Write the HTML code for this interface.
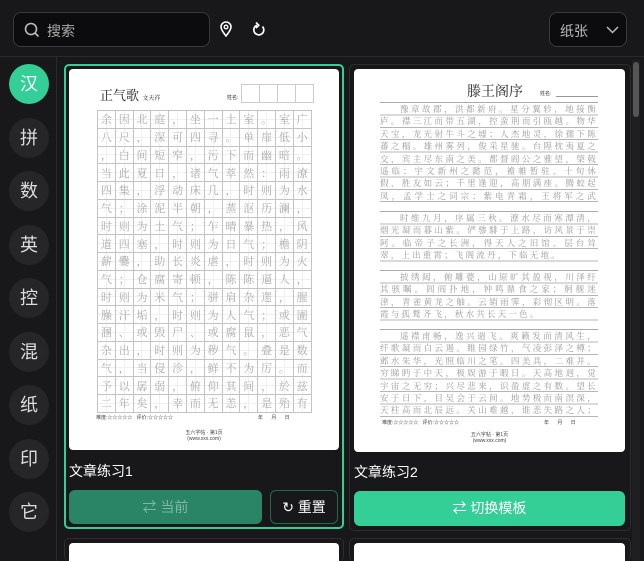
<!DOCTYPE html>
<html style="width:644px;height:561px;overflow:hidden"><head><meta charset="utf-8">
<style>
*{box-sizing:border-box;margin:0;padding:0}
body{width:644px;height:561px;overflow:hidden;background:#18181b;font-family:"Liberation Sans","Noto Sans CJK SC",sans-serif;color:#fff;position:relative}
.abs{position:absolute}
.top{left:0;top:0;width:644px;height:57px;background:#18181b;border-bottom:1px solid #2a2a2e}
.search{left:13px;top:12px;width:197px;height:35px;background:#0c0c0f;border:1px solid #3a3a3e;border-radius:8px}
.search span{position:absolute;left:33px;top:8px;font-size:14px;color:#aaa}
.dd{left:549px;top:12px;width:78px;height:35px;background:#0c0c0f;border:1px solid #3a3a3e;border-radius:8px}
.dd span{position:absolute;left:10px;top:8px;font-size:14px;color:#bbb}
.side{left:0;top:57px;width:57px;height:504px;border-right:1px solid #2a2a2e;background:#18181b}
.c{position:absolute;left:9px;width:40px;height:40px;border-radius:50%;background:#262629;color:#ddd;font-size:18px;text-align:center;line-height:40px}
.c.on{background:#33cf97;color:#fff}
.card{border-radius:5px;background:#18181b;overflow:hidden}
.paper{background:#fff;border-radius:4px;overflow:hidden}
table{border-collapse:collapse;position:absolute;left:28px;top:41px}
td{width:17.8px;height:17.75px;border:1px solid #c4c4c4;font-size:11px;color:#aaa;text-align:center;line-height:16px;padding:0;font-family:"Noto Serif CJK SC",serif;background:linear-gradient(#f0f0f0,#f0f0f0) center/1px 100% no-repeat,linear-gradient(#f0f0f0,#f0f0f0) center/100% 1px no-repeat}
.rp{position:absolute;left:26px;width:218px;font-size:8.5px;line-height:12.4px;letter-spacing:2.2px;color:#999;text-indent:20px;text-align:justify;overflow:hidden;font-family:"Noto Serif CJK SC",serif;background:repeating-linear-gradient(to bottom,transparent 0,transparent 11.4px,#b5b5b5 11.4px,#b5b5b5 12.4px)}
.btn{border-radius:6px;font-size:14px;text-align:center;line-height:34px}
</style></head><body>
<div class="abs top">
 <div class="abs search"><svg class="abs" style="left:10px;top:9px" width="16" height="16" viewBox="0 0 16 16"><circle cx="7" cy="7" r="5.5" fill="none" stroke="#bbb" stroke-width="1.6"/><path d="M11 11l3.5 3.5" stroke="#bbb" stroke-width="1.6"/></svg><span>搜索</span></div>
 <svg class="abs" style="left:219px;top:21px" width="14" height="16" viewBox="0 0 14 16"><path d="M7 15C3 10 2 8 2 6a5 5 0 0 1 10 0c0 2-1 4-5 9z" fill="none" stroke="#fff" stroke-width="1.6"/><circle cx="7" cy="6" r="1.8" fill="none" stroke="#fff" stroke-width="1.4"/></svg>
 <svg class="abs" style="left:252px;top:21px" width="15" height="16" viewBox="0 0 15 16"><path d="M10.5 5.5A5 5 0 1 1 5 4.2" fill="none" stroke="#fff" stroke-width="1.7"/><path d="M4 1.5l2.8 2.8L4 7" fill="none" stroke="#fff" stroke-width="1.6"/></svg>
 <div class="abs dd"><span>纸张</span><svg class="abs" style="left:56px;top:13px" width="13" height="8" viewBox="0 0 13 8"><path d="M1 1l5.5 5.5L12 1" fill="none" stroke="#bbb" stroke-width="1.5"/></svg></div>
</div>
<div class="abs side">
 <div class="c on" style="top:7px">汉</div>
 <div class="c" style="top:61px">拼</div>
 <div class="c" style="top:114px">数</div>
 <div class="c" style="top:168px">英</div>
 <div class="c" style="top:221px">控</div>
 <div class="c" style="top:275px">混</div>
 <div class="c" style="top:328px">纸</div>
 <div class="c" style="top:382px">印</div>
 <div class="c" style="top:435px">它</div>
</div>
<div class="abs" style="left:632px;top:60px;width:8px;height:501px;background:#1f1f22"></div>
<div class="abs" style="left:633px;top:62px;width:6px;height:55px;background:#555;border-radius:3px"></div>

<!-- card 1 -->
<div class="abs card" style="left:64px;top:64px;width:280px;height:465px;border:2px solid #33cf97">
 <div class="abs paper" style="left:3px;top:3px;width:270px;height:381px">
  <div class="abs" style="left:31px;top:16px;font-size:13px;color:#222;font-family:'Noto Serif CJK SC',serif">正气歌 <span style="font-size:6px">文天祥</span></div>
  <div class="abs" style="left:158px;top:25px;font-size:5px;color:#333">姓名:</div>
  <div class="abs" style="left:172px;top:15px;width:73px;height:19px;border:1px solid #ccc;background:repeating-linear-gradient(to right,transparent 0,transparent 17px,#ccc 17px,#ccc 18px)"></div>
  <table>
  <tr><td>余</td><td>因</td><td>北</td><td>庭</td><td>，</td><td>坐</td><td>一</td><td>土</td><td>室</td><td>。</td><td>室</td><td>广</td></tr>
  <tr><td>八</td><td>尺</td><td>，</td><td>深</td><td>可</td><td>四</td><td>寻</td><td>。</td><td>单</td><td>扉</td><td>低</td><td>小</td></tr>
  <tr><td>，</td><td>白</td><td>间</td><td>短</td><td>窄</td><td>，</td><td>污</td><td>下</td><td>而</td><td>幽</td><td>暗</td><td>。</td></tr>
  <tr><td>当</td><td>此</td><td>夏</td><td>日</td><td>，</td><td>诸</td><td>气</td><td>萃</td><td>然</td><td>：</td><td>雨</td><td>潦</td></tr>
  <tr><td>四</td><td>集</td><td>，</td><td>浮</td><td>动</td><td>床</td><td>几</td><td>，</td><td>时</td><td>则</td><td>为</td><td>水</td></tr>
  <tr><td>气</td><td>；</td><td>涂</td><td>泥</td><td>半</td><td>朝</td><td>，</td><td>蒸</td><td>沤</td><td>历</td><td>澜</td><td>，</td></tr>
  <tr><td>时</td><td>则</td><td>为</td><td>土</td><td>气</td><td>；</td><td>乍</td><td>晴</td><td>暴</td><td>热</td><td>，</td><td>风</td></tr>
  <tr><td>道</td><td>四</td><td>塞</td><td>，</td><td>时</td><td>则</td><td>为</td><td>日</td><td>气</td><td>；</td><td>檐</td><td>阴</td></tr>
  <tr><td>薪</td><td>爨</td><td>，</td><td>助</td><td>长</td><td>炎</td><td>虐</td><td>，</td><td>时</td><td>则</td><td>为</td><td>火</td></tr>
  <tr><td>气</td><td>；</td><td>仓</td><td>腐</td><td>寄</td><td>顿</td><td>，</td><td>陈</td><td>陈</td><td>逼</td><td>人</td><td>，</td></tr>
  <tr><td>时</td><td>则</td><td>为</td><td>米</td><td>气</td><td>；</td><td>骈</td><td>肩</td><td>杂</td><td>遝</td><td>，</td><td>腥</td></tr>
  <tr><td>臊</td><td>汗</td><td>垢</td><td>，</td><td>时</td><td>则</td><td>为</td><td>人</td><td>气</td><td>；</td><td>或</td><td>圊</td></tr>
  <tr><td>溷</td><td>、</td><td>或</td><td>毁</td><td>尸</td><td>、</td><td>或</td><td>腐</td><td>鼠</td><td>，</td><td>恶</td><td>气</td></tr>
  <tr><td>杂</td><td>出</td><td>，</td><td>时</td><td>则</td><td>为</td><td>秽</td><td>气</td><td>。</td><td>叠</td><td>是</td><td>数</td></tr>
  <tr><td>气</td><td>，</td><td>当</td><td>侵</td><td>沴</td><td>，</td><td>鲜</td><td>不</td><td>为</td><td>厉</td><td>。</td><td>而</td></tr>
  <tr><td>予</td><td>以</td><td>孱</td><td>弱</td><td>，</td><td>俯</td><td>仰</td><td>其</td><td>间</td><td>，</td><td>於</td><td>兹</td></tr>
  <tr><td>二</td><td>年</td><td>矣</td><td>，</td><td>幸</td><td>而</td><td>无</td><td>恙</td><td>，</td><td>是</td><td>殆</td><td>有</td></tr>
  </table>
  <div class="abs" style="left:27px;top:345px;font-size:5px;color:#444">难度:☆☆☆☆☆ &nbsp; 评价:☆☆☆☆☆</div>
  <div class="abs" style="left:189px;top:345px;font-size:5px;color:#444">年 &nbsp;&nbsp;&nbsp;&nbsp; 月 &nbsp;&nbsp;&nbsp;&nbsp; 日</div>
  <div class="abs" style="left:0;top:361px;width:270px;text-align:center;font-size:5px;line-height:6px;color:#444">五六字帖 · 第1页<br>(www.xxx.com)</div>
 </div>
 <div class="abs" style="left:3px;top:395px;font-size:14px">文章练习1</div>
 <div class="abs btn" style="left:3px;top:424px;width:193px;height:34px;background:#2a8566;color:#7fb9a2">⇄ 当前</div>
 <div class="abs btn" style="left:204px;top:424px;width:68px;height:34px;border:1px solid #1f6b52;line-height:32px">↻ 重置</div>
</div>

<!-- card 2 -->
<div class="abs card" style="left:349px;top:64px;width:282px;height:467px;border:1px solid #2e2e32">
 <div class="abs paper" style="left:4px;top:4px;width:271px;height:383px">
  <div class="abs" style="left:113px;top:12px;font-size:14px;color:#222;font-family:'Noto Serif CJK SC',serif">滕王阁序</div>
  <div class="abs" style="left:186px;top:21px;font-size:5px;color:#333">姓名:</div>
  <div class="abs" style="left:202px;top:27px;width:42px;height:1px;background:#999"></div>
  <div class="abs" style="left:26px;top:33px;width:218px;height:1px;background:#aaa"></div>
  <div class="rp" style="top:34px;height:99px">豫章故郡，洪都新府。星分翼轸，地接衡庐。襟三江而带五湖，控蛮荆而引瓯越。物华天宝，龙光射牛斗之墟；人杰地灵，徐孺下陈蕃之榻。雄州雾列，俊采星驰。台隍枕夷夏之交，宾主尽东南之美。都督阎公之雅望，棨戟遥临；宇文新州之懿范，襜帷暂驻。十旬休假，胜友如云；千里逢迎，高朋满座。腾蛟起凤，孟学士之词宗；紫电青霜，王将军之武库。家君作宰，路出名区；童子何知，躬逢胜饯。</div>
  <div class="abs" style="left:26px;top:142px;width:218px;height:1px;background:#aaa"></div>
  <div class="rp" style="top:143px;height:50px">时维九月，序属三秋。潦水尽而寒潭清，烟光凝而暮山紫。俨骖騑于上路，访风景于崇阿。临帝子之长洲，得天人之旧馆。层台耸翠，上出重霄；飞阁流丹，下临无地。</div>
  <div class="abs" style="left:26px;top:201px;width:218px;height:1px;background:#aaa"></div>
  <div class="rp" style="top:202px;height:50px">披绣闼，俯雕甍，山原旷其盈视，川泽纡其骇瞩。闾阎扑地，钟鸣鼎食之家；舸舰迷津，青雀黄龙之舳。云销雨霁，彩彻区明。落霞与孤鹜齐飞，秋水共长天一色。</div>
  <div class="abs" style="left:26px;top:260px;width:218px;height:1px;background:#aaa"></div>
  <div class="rp" style="top:261px;height:87px">遥襟甫畅，逸兴遄飞。爽籁发而清风生，纤歌凝而白云遏。睢园绿竹，气凌彭泽之樽；邺水朱华，光照临川之笔。四美具，二难并。穷睇眄于中天，极娱游于暇日。天高地迥，觉宇宙之无穷；兴尽悲来，识盈虚之有数。望长安于日下，目吴会于云间。地势极而南溟深，天柱高而北辰远。关山难越，谁悲失路之人；萍水相逢，尽是他乡之客。怀帝阍而不见，奉宣室以何年？</div>
  <div class="abs" style="left:28px;top:350px;font-size:5px;color:#444">难度:☆☆☆☆☆ &nbsp; 评价:☆☆☆☆☆</div>
  <div class="abs" style="left:190px;top:350px;font-size:5px;color:#444">年 &nbsp;&nbsp;&nbsp;&nbsp; 月 &nbsp;&nbsp;&nbsp;&nbsp; 日</div>
  <div class="abs" style="left:0;top:363px;width:271px;text-align:center;font-size:5px;line-height:6px;color:#444">五六字帖 · 第1页<br>(www.xxx.com)</div>
 </div>
 <div class="abs" style="left:4px;top:397px;font-size:14px">文章练习2</div>
 <div class="abs btn" style="left:4px;top:426px;width:271px;height:35px;background:#33cf97;color:#fff">⇄ 切换模板</div>
</div>

<!-- next cards -->
<div class="abs card" style="left:64px;top:538px;width:280px;height:23px;border:1px solid #2e2e32;border-bottom:none">
 <div class="abs paper" style="left:4px;top:4px;width:270px;height:30px"></div></div>
<div class="abs card" style="left:349px;top:538px;width:282px;height:23px;border:1px solid #2e2e32;border-bottom:none">
 <div class="abs paper" style="left:4px;top:4px;width:271px;height:30px"></div></div>
</body></html>
